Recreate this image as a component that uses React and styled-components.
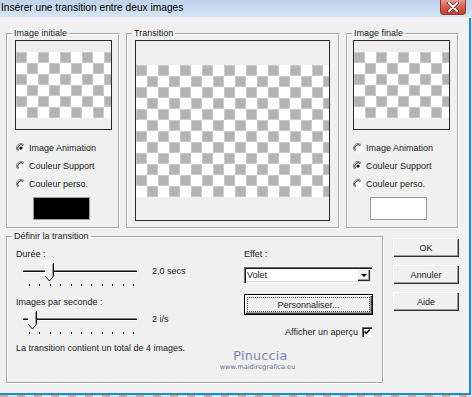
import React from 'react';
import styled, { createGlobalStyle } from 'styled-components';

const GlobalStyle = createGlobalStyle`
  html, body { margin: 0; padding: 0; background: #f0f0f0; }
  body {
    font-family: "Liberation Sans", Arial, sans-serif;
    font-size: 9px;
    color: #1a1a1a;
  }
`;

const Frame = styled.div`
  width: 472px;
  height: 397px;
  display: flex;
  flex-direction: column;
  overflow: hidden;
  background: #ead8d4;
`;

const TitleBar = styled.div`
  height: 18px;
  flex: none;
  display: flex;
  align-items: flex-start;
  justify-content: space-between;
  padding: 0 6px 0 1px;
  box-sizing: border-box;
  background: linear-gradient(180deg, #bfd3ea 0%, #cadcef 60%, #d8e5f3 100%);
  border-bottom: 1px solid #e6eef7;
`;

const Title = styled.span`
  font-size: 10.2px;
  line-height: 16px;
  color: #000;
`;

const CloseButton = styled.div`
  width: 26px;
  height: 15px;
  display: flex;
  align-items: center;
  justify-content: center;
  box-sizing: border-box;
  border: 1px solid #8e3328;
  border-top: none;
  border-radius: 0 0 4px 4px;
  background: linear-gradient(180deg, #e79a8e 0%, #d7604f 50%, #c2402f 100%);
`;

const Body = styled.div`
  width: 471px;
  height: 377px;
  flex: none;
  box-sizing: border-box;
  background: #f0f0f0;
  border-right: 2px solid #1b8bd2;
  border-bottom: 2px solid #1b8bd2;
  padding: 10px 0 0 6px;
`;

const Footer = styled.div`
  flex: 1;
  background: repeating-linear-gradient(90deg, #d8a799 0 8px, #d6e3ee 8px 17px);
`;

const TopRow = styled.div`
  display: grid;
  grid-template-columns: 113px 213px 112px;
  column-gap: 7px;
  height: 200px;
`;

const BottomRow = styled.div`
  display: grid;
  grid-template-columns: 377px 66px;
  column-gap: 10px;
  margin-top: 3px;
`;

const Group = styled.fieldset`
  position: relative;
  margin: 0;
  padding: 0;
  min-width: 0;
  box-sizing: border-box;
  height: ${p => p.$height || '100%'};
  border: 1px solid #a8a8a8;
  box-shadow: 1px 1px 0 #fff, inset 1px 1px 0 #fff;
`;

const Legend = styled.legend`
  margin-left: 5px;
  padding: 0 2px;
  line-height: 11px;
  font-size: 9px;
`;

const GroupBody = styled.div`
  padding: 1px 0 0 ${p => p.$pad}px;
`;

const Preview = styled.div`
  width: ${p => p.$w}px;
  height: ${p => p.$h}px;
  box-sizing: border-box;
  border: 1px solid #2a2a2a;
  background: #efefef;
  display: flex;
  flex-direction: column;
  justify-content: center;
  overflow: hidden;
`;

const RadioList = styled.div`
  margin-top: 9px;
  padding-left: ${p => p.$indent || 0}px;
`;

const RadioRow = styled.div`
  height: 18px;
  display: flex;
  align-items: center;
  gap: 3px;
  line-height: 12px;
`;

const Swatch = styled.div`
  width: 57px;
  height: 23px;
  margin: 4px 0 0 ${p => p.$left}px;
  box-sizing: border-box;
  border: 1px solid #9a9a9a;
  background: ${p => p.$color};
`;

const SettingsBody = styled.div`
  display: grid;
  grid-template-columns: 228px 129px;
  padding-left: 9px;
`;

const Column = styled.div`
  display: flex;
  flex-direction: column;
`;

const Label = styled.div`
  line-height: 12px;
  margin-top: ${p => p.$top || 0}px;
  white-space: nowrap;
`;

const SliderRow = styled.div`
  display: flex;
  align-items: flex-start;
`;

const SliderValue = styled.span`
  margin: 5px 0 0 6px;
  line-height: 12px;
  white-space: nowrap;
`;

const Select = styled.div`
  margin-top: 7px;
  width: 128px;
  height: 16px;
  box-sizing: border-box;
  display: flex;
  align-items: center;
  justify-content: space-between;
  padding: 0 2px 0 3px;
  background: #fff;
  box-shadow: inset 1px 1px 0 #6a6a6a, inset 2px 2px 0 #1a1a1a, inset -1px -1px 0 #fff, inset -2px -2px 0 #d8d8d8;
`;

const SelectArrow = styled.div`
  width: 13px;
  height: 12px;
  display: flex;
  align-items: center;
  justify-content: center;
  background: #f0f0f0;
  box-shadow: inset 1px 1px 0 #fff, inset -1px -1px 0 #2a2a2a, inset -2px -2px 0 #a0a0a0;

  &::after {
    content: "";
    border-left: 3px solid transparent;
    border-right: 3px solid transparent;
    border-top: 3px solid #000;
  }
`;

const CustomButton = styled.div`
  margin-top: 11px;
  width: 129px;
  height: 21px;
  box-sizing: border-box;
  border: 1px solid #000;
  padding: 2px;
  background: #f0f0f0;
  box-shadow: inset 1px 1px 0 #fff, inset -1px -1px 0 #404040, inset -2px -2px 0 #a0a0a0;
`;

const FocusRect = styled.div`
  height: 100%;
  box-sizing: border-box;
  border: 1px dotted #444;
  display: flex;
  align-items: center;
  justify-content: center;
`;

const CheckRow = styled.div`
  margin-top: 11px;
  height: 11px;
  display: flex;
  align-items: center;
  justify-content: flex-end;
  gap: 4px;
  padding-right: 1px;
`;

const CheckBox = styled.div`
  width: 10px;
  height: 10px;
  box-sizing: border-box;
  background: #fff;
  display: flex;
  align-items: center;
  justify-content: center;
  box-shadow: inset 1px 1px 0 #6a6a6a, inset 2px 2px 0 #1a1a1a;
`;

const Watermark = styled.div`
  position: absolute;
  left: 209px;
  top: 106px;
  width: 83px;
  display: flex;
  flex-direction: column;
  align-items: center;
  pointer-events: none;
`;

const WatermarkName = styled.span`
  font-family: "DejaVu Sans", sans-serif;
  font-size: 12.8px;
  line-height: 15px;
  letter-spacing: 0.2px;
  color: #8080b4;
  margin-left: 6px;
`;

const WatermarkUrl = styled.span`
  font-family: "DejaVu Sans", sans-serif;
  font-size: 6.6px;
  line-height: 8px;
  color: #6d6d9c;
`;

const ButtonColumn = styled.div`
  display: flex;
  flex-direction: column;
  gap: 8px;
  margin-top: 7px;
`;

const DialogButton = styled.div`
  width: 66px;
  height: 19px;
  display: flex;
  align-items: center;
  justify-content: center;
  background: #f0f0f0;
  box-shadow: inset 1px 1px 0 #fff, inset -1px -1px 0 #303030, inset -2px -2px 0 #a0a0a0;
`;

function Checker({ width, rows }) {
  const id = `chk-${width}-${rows}`;
  return (
    <svg width={width} height={rows * 11} style={{ display: 'block', flex: 'none' }}>
      <defs>
        <pattern id={id} width="22" height="22" patternUnits="userSpaceOnUse">
          <rect width="22" height="22" fill="#fff" />
          <rect x="0.5" y="0.5" width="10" height="10" fill="#b3b3b3" stroke="#c9c9c9" />
          <rect x="11.5" y="11.5" width="10" height="10" fill="#b3b3b3" stroke="#c9c9c9" />
        </pattern>
      </defs>
      <rect width={width} height={rows * 11} fill={`url(#${id})`} />
    </svg>
  );
}

function Radio({ checked }) {
  return (
    <svg width="10" height="10" viewBox="0 0 10 10" style={{ flex: 'none' }}>
      <circle cx="5" cy="5" r="4.5" fill="#fff" />
      <path d="M8.2 1.8 A4.5 4.5 0 0 0 1.8 8.2" fill="none" stroke="#808080" />
      <path d="M7.4 2.6 A3.4 3.4 0 0 0 2.6 7.4" fill="none" stroke="#222" />
      {checked && <circle cx="5" cy="5" r="1.6" fill="#000" />}
    </svg>
  );
}

function Trackbar({ thumb }) {
  const ticks = Array.from({ length: 11 }, (_, i) => 13 + i * 10.4);
  const l = thumb - 4.5;
  const r = thumb + 4.5;
  return (
    <svg width="130" height="28" viewBox="0 0 130 28" style={{ flex: 'none' }}>
      <rect x="7" y="10" width="114" height="1" fill="#7a7a7a" />
      <rect x="7" y="11" width="114" height="1" fill="#111" />
      <rect x="7" y="12" width="114" height="1" fill="#fff" />
      {ticks.map(t => (
        <rect key={t} x={Math.round(t)} y="24" width="1" height="2" fill="#111" />
      ))}
      <polygon points={`${l},3 ${r},3 ${r},16 ${thumb},21 ${l},16`} fill="#f0f0f0" />
      <polyline points={`${l + 0.5},16 ${l + 0.5},3.5 ${r - 0.5},3.5`} fill="none" stroke="#fff" />
      <polyline points={`${r - 0.5},3 ${r - 0.5},16 ${thumb},21 ${l},16`} fill="none" stroke="#111" />
      <polyline points={`${r - 1.5},4 ${r - 1.5},15.5`} fill="none" stroke="#9a9a9a" />
    </svg>
  );
}

function CloseGlyph() {
  return (
    <svg width="12" height="10" viewBox="0 0 12 10">
      <path d="M2 1 L10 9 M10 1 L2 9" stroke="#5a1d16" strokeWidth="3.4" strokeLinecap="round" />
      <path d="M2 1 L10 9 M10 1 L2 9" stroke="#fff" strokeWidth="2" strokeLinecap="round" />
    </svg>
  );
}

function CheckMark() {
  return (
    <svg width="8" height="8" viewBox="0 0 8 8">
      <path d="M1.5 3.5 L3.2 5.5 L6.8 1.8" fill="none" stroke="#000" strokeWidth="1.4" />
    </svg>
  );
}

function ImageGroup({ title, selected, color, pad, indent, swatchLeft }) {
  const options = ['Image Animation', 'Couleur Support', 'Couleur perso.'];
  return (
    <Group>
      <Legend>{title}</Legend>
      <GroupBody $pad={pad}>
        <Preview $w={97} $h={90}>
          <Checker width={95} rows={6} />
        </Preview>
        <RadioList $indent={indent}>
          {options.map(opt => (
            <RadioRow key={opt}>
              <Radio checked={opt === selected} />
              <span>{opt}</span>
            </RadioRow>
          ))}
        </RadioList>
        <Swatch $color={color} $left={swatchLeft} />
      </GroupBody>
    </Group>
  );
}

export default function App() {
  return (
    <Frame>
      <GlobalStyle />
      <TitleBar>
        <Title>Insérer une transition entre deux images</Title>
        <CloseButton>
          <CloseGlyph />
        </CloseButton>
      </TitleBar>
      <Body>
        <TopRow>
          <ImageGroup title="Image initiale" selected="Image Animation" color="#000" pad={8} indent={1} swatchLeft={18} />
          <Group>
            <Legend>Transition</Legend>
            <GroupBody $pad={8}>
              <Preview $w={195} $h={181}>
                <Checker width={193} rows={12} />
              </Preview>
            </GroupBody>
          </Group>
          <ImageGroup title="Image finale" selected="Couleur Support" color="#fff" pad={6} indent={0} swatchLeft={17} />
        </TopRow>
        <BottomRow>
          <Group $height="152px">
            <Legend>Définir la transition</Legend>
            <SettingsBody>
              <Column>
                <Label $top={6}>Durée :</Label>
                <SliderRow>
                  <Trackbar thumb={33.5} />
                  <SliderValue>2,0 secs</SliderValue>
                </SliderRow>
                <Label $top={8}>Images par seconde :</Label>
                <SliderRow>
                  <Trackbar thumb={16.5} />
                  <SliderValue>2 i/s</SliderValue>
                </SliderRow>
                <Label $top={6}>La transition contient un total de 4 images.</Label>
              </Column>
              <Column>
                <Label $top={6}>Effet :</Label>
                <Select>
                  <span>Volet</span>
                  <SelectArrow />
                </Select>
                <CustomButton>
                  <FocusRect>Personnaliser...</FocusRect>
                </CustomButton>
                <CheckRow>
                  <span>Afficher un aperçu</span>
                  <CheckBox>
                    <CheckMark />
                  </CheckBox>
                </CheckRow>
              </Column>
            </SettingsBody>
            <Watermark>
              <WatermarkName>Pinuccia</WatermarkName>
              <WatermarkUrl>www.maidiregrafica.eu</WatermarkUrl>
            </Watermark>
          </Group>
          <ButtonColumn>
            <DialogButton>OK</DialogButton>
            <DialogButton>Annuler</DialogButton>
            <DialogButton>Aide</DialogButton>
          </ButtonColumn>
        </BottomRow>
      </Body>
      <Footer />
    </Frame>
  );
}
